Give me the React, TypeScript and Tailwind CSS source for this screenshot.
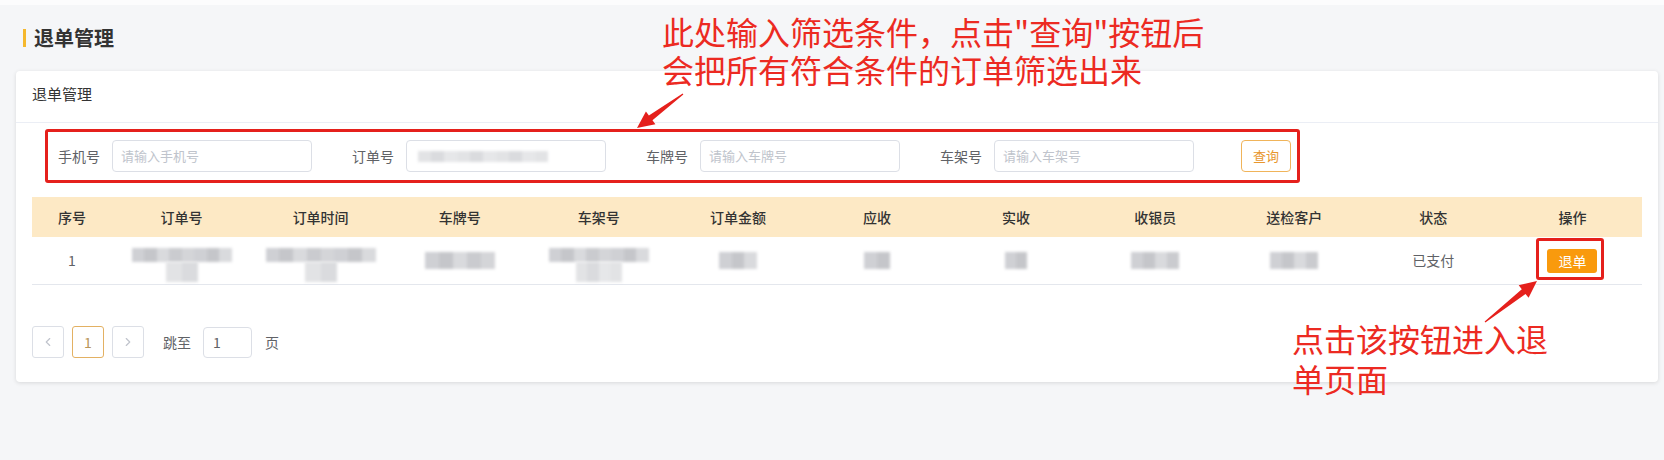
import React from 'react';
import { ChevronLeft, ChevronRight } from 'lucide-react';

const COLS = ['序号', '订单号', '订单时间', '车牌号', '车架号', '订单金额', '应收', '实收', '收银员', '送检客户', '状态', '操作'];

const SHADES = ['#cfd0d4', '#c5c6ca', '#d9dadd', '#cacbcf', '#d4d5d8'];

// pixelated placeholder for the blurred-out values
function Bars({ width, height, light = false }: { width: number; height: number; light?: boolean }) {
    const n = Math.max(1, Math.round(width / 13));
    return (
        <div className="flex blur-[1.5px]" style={{ width, height }}>
            {Array.from({ length: n }).map((_, i) => (
                <div
                    key={i}
                    className="flex-1 h-full"
                    style={{ background: light ? ['#e2e3e5', '#dadbde', '#e6e7e9'][i % 3] : SHADES[i % SHADES.length] }}
                />
            ))}
        </div>
    );
}

function Mosaic({ top, bottom }: { top: number; bottom?: number }) {
    if (!bottom) return <Bars width={top} height={17} />;
    return (
        <div className="flex flex-col items-center mt-[8px]">
            <Bars width={top} height={14} />
            <Bars width={bottom} height={20} light />
        </div>
    );
}

function arrowPoints(tx: number, ty: number, px: number, py: number) {
    const dx = px - tx, dy = py - ty;
    const len = Math.hypot(dx, dy);
    const ux = dx / len, uy = dy / len;
    const nx = -uy, ny = ux;
    const head = 17, hw = 8, sw = 3;
    const bx = px - ux * head, by = py - uy * head;
    const pts = [
        [tx + nx * 0.6, ty + ny * 0.6],
        [bx + nx * sw, by + ny * sw],
        [bx + nx * hw, by + ny * hw],
        [px, py],
        [bx - nx * hw, by - ny * hw],
        [bx - nx * sw, by - ny * sw],
        [tx - nx * 0.6, ty - ny * 0.6],
    ];
    return pts.map(p => p.join(',')).join(' ');
}

const FILTERS = [
    { label: '手机号', ph: '请输入手机号' },
    { label: '订单号', ph: '' },
    { label: '车牌号', ph: '请输入车牌号' },
    { label: '车架号', ph: '请输入车架号' },
];

export default function App() {
    return (
        <div className="relative w-full h-[460px] overflow-hidden bg-[#f5f6f8] font-['Noto_Sans_CJK_SC',sans-serif] text-[#606266]">
            <div className="h-[5px] bg-[#fcfcfd]" />

            {/* Page title */}
            <div className="flex items-center mt-[23px] ml-[23px] h-[20px] gap-[8px]">
                <div className="w-[3px] h-[18px] bg-[#f5b82e]" />
                <span className="text-[20px] leading-[20px] font-bold text-[#333]">退单管理</span>
            </div>

            {/* Card */}
            <div className="mt-[23px] ml-[16px] mr-[6px] bg-white rounded-[4px] shadow-[0_1px_4px_rgba(0,0,0,0.12)]">
                <div className="h-[52px] px-[16px] pb-[6px] flex items-center border-b border-[#ebeef5]">
                    <span className="text-[15px] leading-[16px] text-[#333]">退单管理</span>
                </div>

                <div className="px-[16px]">
                    {/* Filters */}
                    <div className="pt-[17px] pl-[26px] flex items-center">
                        {FILTERS.map((f, i) => (
                            <div key={f.label} className={i === 3 ? 'flex items-center mr-[47px]' : 'flex items-center mr-[40px]'}>
                                <span className="text-[14px] leading-[16px] mr-[12px]">{f.label}</span>
                                <div className="w-[200px] h-[32px] border border-[#dcdfe6] rounded-[4px] flex items-center pl-[8px] text-[13px] text-[#c0c4cc]">
                                    {f.ph ? f.ph : (
                                        <div className="pl-[3px]">
                                            <Bars width={130} height={11} light />
                                        </div>
                                    )}
                                </div>
                            </div>
                        ))}
                        <button className="w-[50px] h-[32px] border border-[#f0b45a] rounded-[4px] text-[13px] text-[#e8962d] bg-white">
                            查询
                        </button>
                    </div>

                    {/* Table */}
                    <div className="mt-[25px]">
                        <div className="grid grid-cols-[80px_repeat(11,1fr)] h-[40px] bg-[#fde9c5] items-center">
                            {COLS.map(c => (
                                <div key={c} className="text-center text-[14px] font-medium text-[#333]">{c}</div>
                            ))}
                        </div>
                        <div className="grid grid-cols-[80px_repeat(11,1fr)] h-[48px] border-b border-[#e4e7ed] items-center text-[14px]">
                            <div className="text-center">1</div>
                            <div className="flex justify-center"><Mosaic top={100} bottom={32} /></div>
                            <div className="flex justify-center"><Mosaic top={110} bottom={32} /></div>
                            <div className="flex justify-center"><Mosaic top={70} /></div>
                            <div className="flex justify-center"><Mosaic top={100} bottom={46} /></div>
                            <div className="flex justify-center"><Mosaic top={38} /></div>
                            <div className="flex justify-center"><Mosaic top={26} /></div>
                            <div className="flex justify-center"><Mosaic top={22} /></div>
                            <div className="flex justify-center"><Mosaic top={48} /></div>
                            <div className="flex justify-center"><Mosaic top={48} /></div>
                            <div className="text-center">已支付</div>
                            <div className="flex justify-center">
                                <button className="w-[50px] h-[24px] rounded-[3px] bg-[#f99a0d] text-white text-[14px] leading-[24px]">退单</button>
                            </div>
                        </div>
                    </div>

                    {/* Pagination */}
                    <div className="mt-[41px] pb-[24px] flex items-center">
                        <div className="w-[32px] h-[32px] border border-[#dcdfe6] rounded-[3px] flex items-center justify-center text-[#c0c4cc]">
                            <ChevronLeft size={14} />
                        </div>
                        <div className="ml-[8px] w-[32px] h-[32px] border border-[#e3b163] rounded-[3px] flex items-center justify-center text-[14px] text-[#b9955a]">
                            1
                        </div>
                        <div className="ml-[8px] w-[32px] h-[32px] border border-[#dcdfe6] rounded-[3px] flex items-center justify-center text-[#c0c4cc]">
                            <ChevronRight size={14} />
                        </div>
                        <span className="ml-[19px] text-[14px]">跳至</span>
                        <div className="ml-[12px] w-[49px] h-[31px] border border-[#dcdfe6] rounded-[4px] flex items-center pl-[9px] text-[14px]">1</div>
                        <span className="ml-[13px] text-[14px]">页</span>
                    </div>
                </div>
            </div>

            {/* Annotations */}
            <div className="absolute left-[45px] top-[129px] w-[1255px] h-[54px] border-[3px] border-[#e5201c] rounded-[3px]" />
            <div className="absolute left-[1536px] top-[238px] w-[68px] h-[42px] border-[3px] border-[#e5201c] rounded-[3px]" />

            <div className="absolute left-[662px] top-[12px] text-[32px] leading-[38px] text-[#ec2a22] whitespace-nowrap">
                此处输入筛选条件，点击"查询"按钮后<br />会把所有符合条件的订单筛选出来
            </div>
            <div className="absolute left-[1292px] top-[318px] text-[32px] leading-[40px] text-[#ec2a22] whitespace-nowrap">
                点击该按钮进入退<br />单页面
            </div>

            <svg className="absolute inset-0 pointer-events-none" width="1664" height="460">
                <polygon points={arrowPoints(683, 94, 637, 128)} fill="#e5201c" />
                <polygon points={arrowPoints(1485, 322, 1537, 281)} fill="#e5201c" />
            </svg>
        </div>
    );
}
